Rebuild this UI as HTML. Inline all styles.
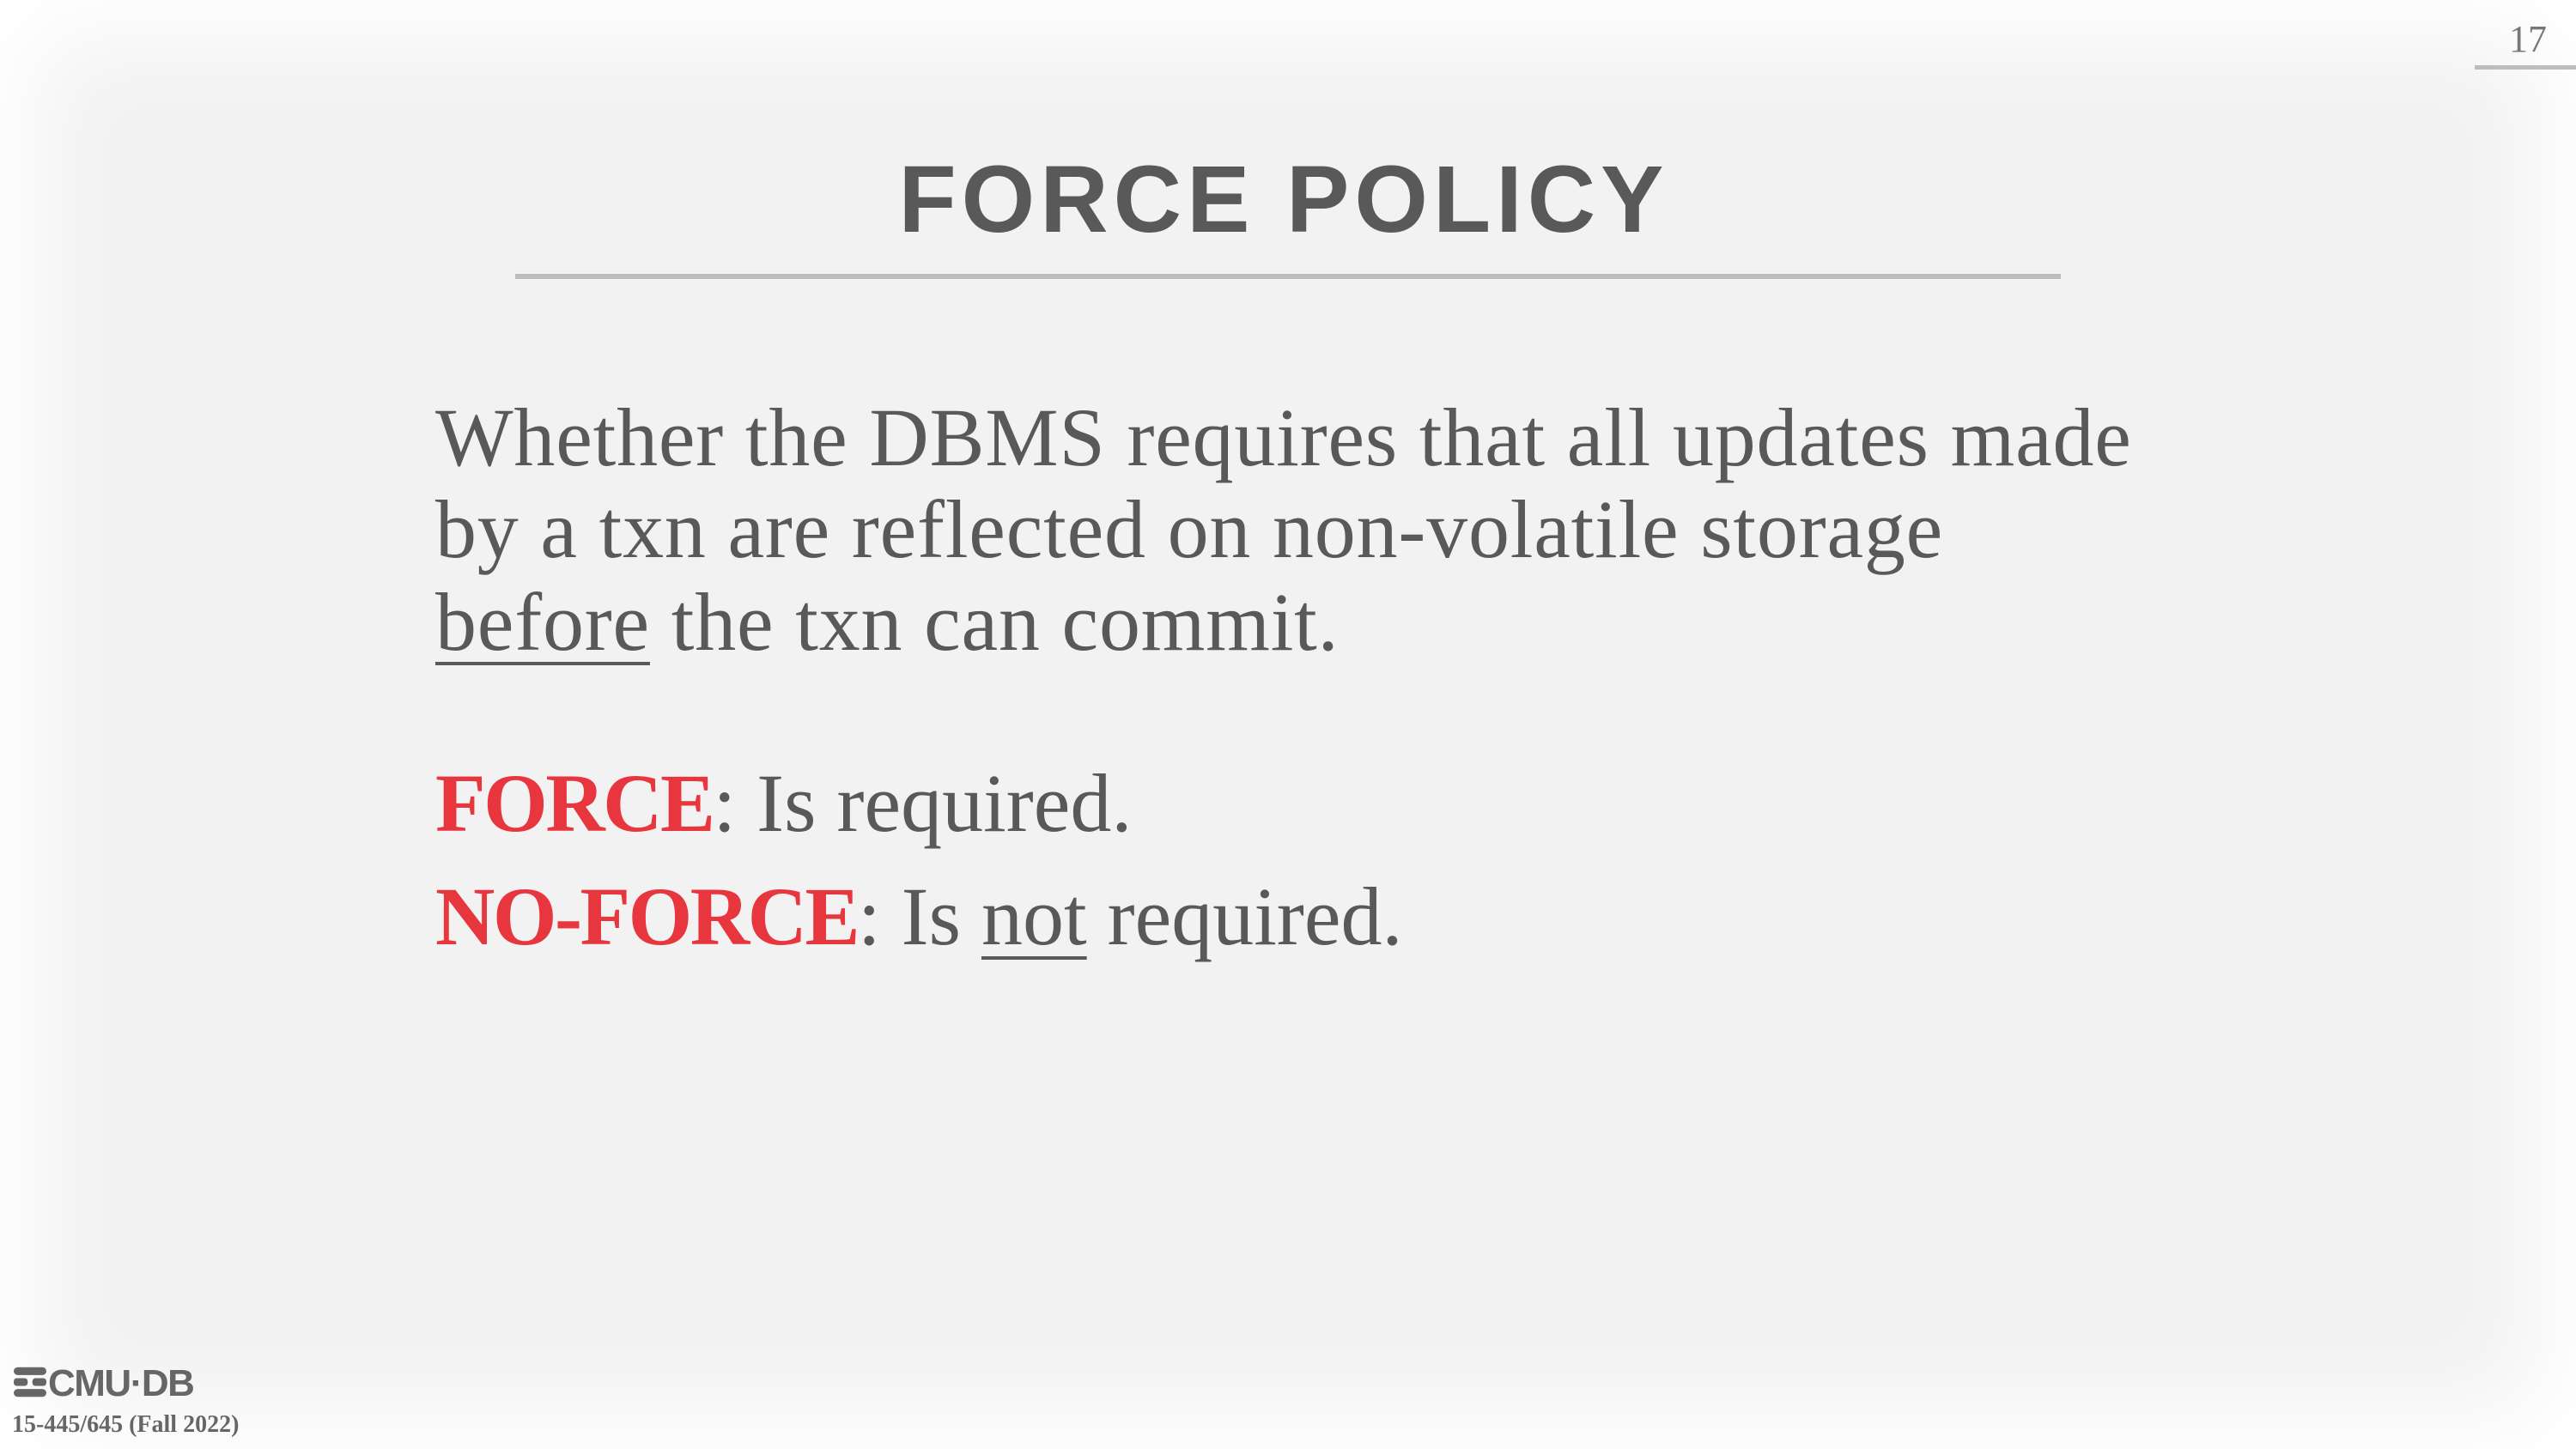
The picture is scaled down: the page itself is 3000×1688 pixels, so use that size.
<!DOCTYPE html>
<html><head><meta charset="utf-8"><style>
html,body{margin:0;padding:0}
body{width:3000px;height:1688px;background:#f2f2f2;position:relative;overflow:hidden;font-family:"Liberation Serif",serif;color:#595959}
.vig{position:absolute;inset:0;box-shadow:inset 0 0 110px 45px #fff;pointer-events:none}
.t{position:absolute;left:0;width:2990px;text-align:center;top:178px;font:bold 110px/1 "Liberation Sans",sans-serif;letter-spacing:6px;color:#595959}
.rule{position:absolute;left:600px;width:1800px;top:319px;height:6px;background:#bdbdbd}
.l{position:absolute;left:507px;font-size:96px;line-height:1;white-space:nowrap;letter-spacing:0.8px}
.u{text-decoration:underline;text-decoration-thickness:4px;text-underline-offset:14px}
.r{color:#e8363f;font-weight:bold;letter-spacing:-2.5px}
.pn{position:absolute;left:2922px;top:20px;font-size:44px;color:#777}
.pl{position:absolute;left:2882px;width:118px;top:76px;height:5px;background:#bdbdbd}
.logo{position:absolute;left:14px;top:1590px;font:bold 44px/1 "Liberation Sans",sans-serif;color:#666;letter-spacing:-1.5px}
.ft{position:absolute;left:14px;top:1646px;font:bold 28px/1 "Liberation Serif",serif;color:#666}
</style></head><body>
<div class="vig"></div>
<div class="t">FORCE POLICY</div>
<div class="rule"></div>
<div class="l" style="top:462px">Whether the DBMS requires that all updates made</div>
<div class="l" style="top:569px">by a txn are reflected on non-volatile storage</div>
<div class="l" style="top:677px"><span class="u">before</span> the txn can commit.</div>
<div class="l" style="top:888px;letter-spacing:0"><span class="r">FORCE</span>: Is required.</div>
<div class="l" style="top:1020px;letter-spacing:0"><span class="r">NO-FORCE</span>: Is <span class="u">not</span> required.</div>
<div class="pn">17</div>
<div class="pl"></div>
<div class="logo"><svg width="42" height="38" viewBox="0 0 46 42" style="vertical-align:-3px"><g fill="#666"><rect x="2" y="2" width="42" height="10" rx="5"/><rect x="2" y="16" width="18" height="10" rx="4"/><rect x="26" y="16" width="18" height="10" rx="4"/><rect x="2" y="30" width="42" height="10" rx="5"/></g></svg>CMU·DB</div>
<div class="ft">15-445/645 (Fall 2022)</div>
</body></html>
